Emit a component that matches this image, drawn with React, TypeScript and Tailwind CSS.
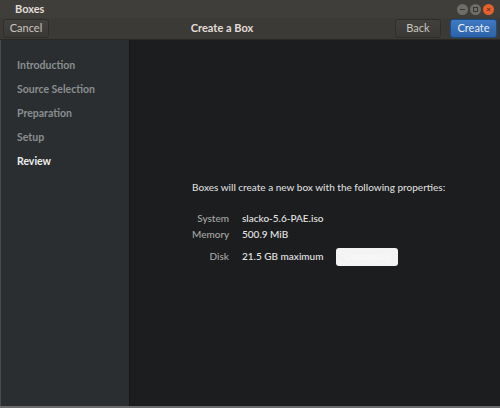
import { ReactNode } from 'react';

const steps = ['Introduction', 'Source Selection', 'Preparation', 'Setup', 'Review'];

function HeaderButton({ children, primary }: { children: ReactNode; primary?: boolean }) {
  return (
    <button
      className={
        primary
          ? 'h-[19px] w-[47px] rounded-[3px] border border-[#1c4a85] bg-gradient-to-b from-[#3f7ac4] to-[#2d62a8] text-[11px] text-[#e8eef6]'
          : 'h-[19px] w-[46px] rounded-[3px] border border-[#2f2e2b] bg-gradient-to-b from-[#43413d] to-[#3a3834] text-[11px] text-[#c9c6c0]'
      }
    >
      {children}
    </button>
  );
}

export default function App() {
  return (
    <div
      className="flex h-[408px] w-[500px] flex-col bg-[#1c1d1e]"
      style={{ fontFamily: 'Lato, "Open Sans", sans-serif' }}
    >
      {/* Title bar */}
      <div className="flex h-[18px] items-center bg-[#403e3a] pl-[15px] pr-[6px]">
        <span className="text-[11px] font-bold text-[#e0ddd6]">Boxes</span>
        <div className="ml-auto flex items-center gap-[2px]">
          <span className="flex h-[11px] w-[11px] items-center justify-center rounded-full bg-[#6f6d68]">
            <span className="h-[1px] w-[5px] bg-[#3a3935]" />
          </span>
          <span className="flex h-[11px] w-[11px] items-center justify-center rounded-full bg-[#6f6d68]">
            <span className="h-[5px] w-[5px] border border-[#3a3935]" />
          </span>
          <span className="flex h-[11px] w-[11px] items-center justify-center rounded-full bg-[#e5602c] text-[8px] font-bold leading-none text-[#6b2a10]">
            ×
          </span>
        </div>
      </div>

      {/* Header bar */}
      <div className="flex h-[22px] items-center border-b border-[#2a2926] bg-[#3c3a36] pl-[3px] pr-[3px]">
        <HeaderButton>Cancel</HeaderButton>
        <span className="flex-1 text-center text-[11px] font-bold text-[#e0ddd6]">Create a Box</span>
        <div className="flex gap-[9px]">
          <HeaderButton>Back</HeaderButton>
          <HeaderButton primary>Create</HeaderButton>
        </div>
      </div>

      {/* Body */}
      <div className="flex flex-1">
        <div className="flex w-[130px] flex-col gap-[9px] border-l border-[#4a4a4a] border-r border-r-[#151616] bg-[#2b2e30] pl-[16px] pt-[18px]">
          {steps.map((s) => (
            <span
              key={s}
              className={
                s === 'Review'
                  ? 'text-[10.5px] leading-[15px] font-bold text-[#eeeeec]'
                  : 'text-[10.5px] leading-[15px] font-bold text-[#8a8e90]'
              }
            >
              {s}
            </span>
          ))}
        </div>

        <div className="flex flex-1 flex-col pl-[62px] pt-[140px]">
          <p className="text-[10px] font-medium text-[#dedede]">Boxes will create a new box with the following properties:</p>
          <div className="mt-[16px] grid grid-cols-[37px_auto] gap-x-[13px] text-[10px] font-medium leading-[15px]">
            <span className="text-right text-[#a8a8a8]">System</span>
            <span className="text-[#e6e6e6]">slacko-5.6-PAE.iso</span>
            <span className="mt-[1px] text-right text-[#a8a8a8]">Memory</span>
            <span className="mt-[1px] text-[#e6e6e6]">500.9 MiB</span>
            <span className="mt-[7px] text-right text-[#a8a8a8]">Disk</span>
            <div className="mt-[7px] flex items-center gap-[13px]">
              <span className="text-[#e6e6e6]">21.5 GB maximum</span>
              <button className="-my-[2px] h-[18px] w-[62px] rounded-[3px] bg-[#f4f4f4] text-[10px] text-[#fafafa]">
                Customize
              </button>
            </div>
          </div>
        </div>
      </div>
      <div className="h-[2px] bg-[#6b6b6b]" />
    </div>
  );
}
